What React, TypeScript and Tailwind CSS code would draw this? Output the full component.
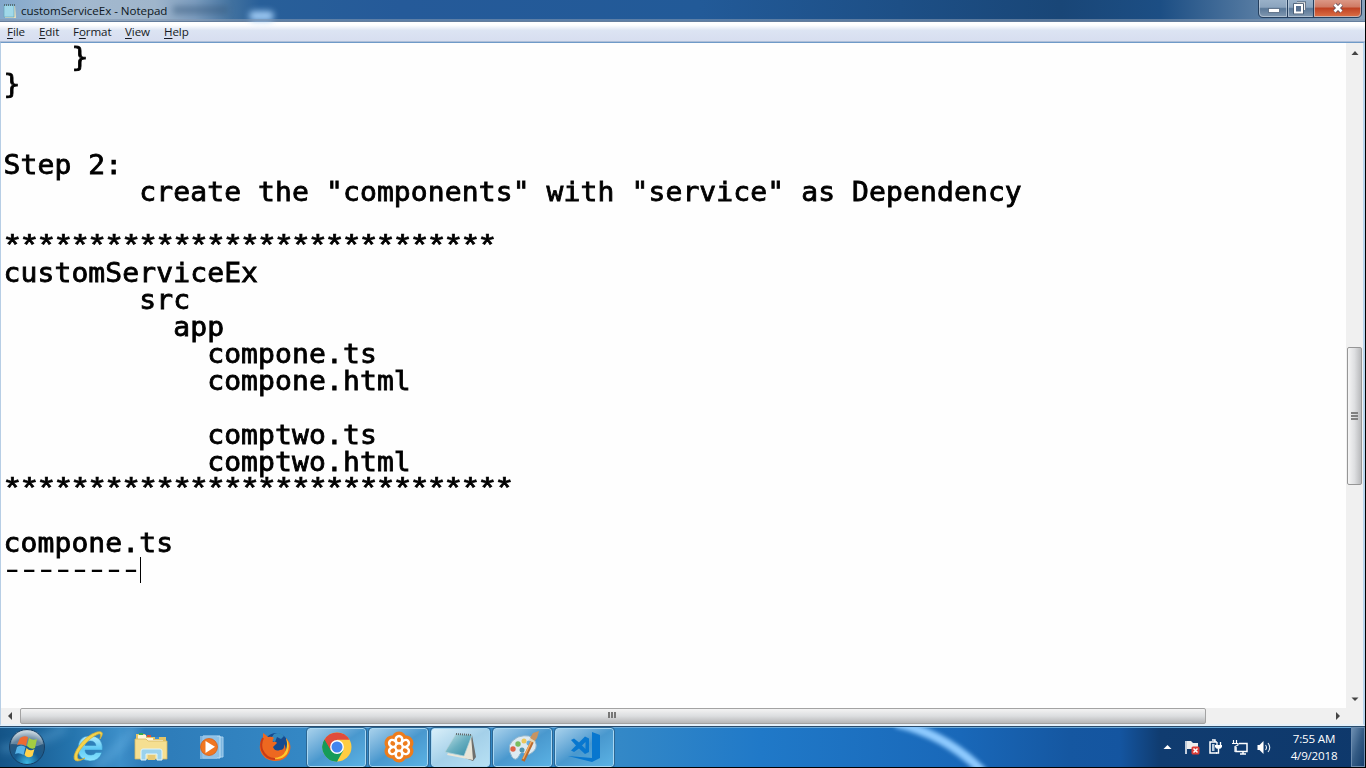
import React from "react";

const lines = [
  "    }",
  "}",
  "",
  "",
  "Step 2:",
  '        create the "components" with "service" as Dependency',
  "",
  "*".repeat(29),
  "customServiceEx",
  "        src",
  "          app",
  "            compone.ts",
  "            compone.html",
  "",
  "            comptwo.ts",
  "            comptwo.html",
  "*".repeat(30),
  "",
  "compone.ts",
  "--------",
];

function Line({ text }: { text: string }) {
  if (text.startsWith("*")) {
    return (
      <div className="h-[27px] font-['Liberation_Mono',monospace] text-[30px] leading-[27px] tracking-[-3.25px] whitespace-pre [-webkit-text-stroke:0.7px_black]">
        <span className="-ml-[2px] inline-block h-[27px] origin-top-left scale-x-[1.15] pt-[3px]">{text}</span>
      </div>
    );
  }
  if (text.startsWith("-")) {
    return (
      <div className="flex h-[27px] items-start [-webkit-text-stroke:0px]">
        <div className="w-[136px]">
          <span className="-ml-[4px] inline-block origin-top-left scale-x-[1.45] leading-[27px] tracking-[-5.16px] whitespace-pre">{text}</span>
        </div>
        <span className="mt-px h-[26px] w-px bg-black" />
      </div>
    );
  }
  return (
    <div className="h-[27px]">
      <span className="inline-block h-[27px] origin-[0_22px] scale-y-[0.92] leading-[27px] whitespace-pre">{text}</span>
    </div>
  );
}

function MenuItem({ k, rest, pre = "", w }: { k: string; rest: string; pre?: string; w: string }) {
  return (
    <span className={w}>
      {pre}
      <span className="underline underline-offset-2">{k}</span>
      {rest}
    </span>
  );
}

function WindowButtons() {
  return (
    <svg width="108" height="20" viewBox="0 0 108 20">
      <defs>
        <linearGradient id="wb" x1="0" y1="0" x2="0" y2="1">
          <stop offset="0" stopColor="#9db4cb" />
          <stop offset=".48" stopColor="#8ba4be" />
          <stop offset=".56" stopColor="#5a7898" />
          <stop offset="1" stopColor="#8299b1" />
        </linearGradient>
        <linearGradient id="wr" x1="0" y1="0" x2="0" y2="1">
          <stop offset="0" stopColor="#dfa08f" />
          <stop offset=".45" stopColor="#d07c66" />
          <stop offset=".55" stopColor="#c04324" />
          <stop offset="1" stopColor="#dd7147" />
        </linearGradient>
      </defs>
      <path d="M3 -2V13Q3 17 7 17H101Q105 17 105 13V-2Z" fill="url(#wb)" />
      <path d="M57 -2H105V13Q105 17 101 17H57Z" fill="url(#wr)" />
      <path d="M2.5 -1V13Q2.5 17.5 7 17.5H101Q105.500 17.500 105.500 13V-1M31.500 0V17M57.500 0V17" fill="none" stroke="#253f5e" />
      <path d="M3.500 0V13Q3.500 16.500 7 16.500H30.500V0M32.500 0V16.500H56.500M58.500 0V16.500H101Q104.500 16.500 104.500 13V0" fill="none" stroke="#c5d3e1" strokeOpacity=".65" />
      <rect x="12.500" y="8.500" width="11" height="4" fill="#fff" stroke="#53667e" strokeWidth=".8" />
      <path d="M41 3H48.500V10" fill="none" stroke="#43556b" strokeWidth="3" />
      <path d="M41 3H48.500V10" fill="none" stroke="#eee" strokeWidth="1.500" />
      <rect x="39" y="5" width="7" height="7.500" fill="#57708f" stroke="#43556b" strokeWidth="3.500" />
      <rect x="39" y="5" width="7" height="7.500" fill="#57708f" stroke="#fff" strokeWidth="2" />
      <path d="M78.500 4.500 85.500 11.500M85.500 4.500 78.500 11.500" stroke="#67505a" strokeWidth="4.500" />
      <path d="M78.500 4.500 85.500 11.500M85.500 4.500 78.500 11.500" stroke="#fff" strokeWidth="2.700" />
    </svg>
  );
}

function StartOrb() {
  return (
    <svg width="38" height="38" viewBox="0 0 38 38">
      <defs>
        <radialGradient id="orb" cx=".5" cy=".95" r=".9">
          <stop offset="0" stopColor="#3bb7e2" />
          <stop offset=".4" stopColor="#155b91" />
          <stop offset=".75" stopColor="#2b587d" />
          <stop offset="1" stopColor="#b9cad5" />
        </radialGradient>
      </defs>
      <circle cx="19" cy="19" r="17.500" fill="url(#orb)" stroke="#163f65" />
      <path d="M3 16Q5 3 19 3T35 16Q27 20 19 18T3 16Z" fill="#fff" opacity=".27" />
      <path d="M12 10Q16 7 20 9L18 18Q14 15 9 17Z" fill="#ed6b32" />
      <path d="M21 10Q25 13 29 11L27 20Q23 22 19 18Z" fill="#a4cd42" />
      <path d="M9 19Q13 16 17.500 19L15.500 27Q11 24 7 26Z" fill="#58b4e8" />
      <path d="M18.500 20Q22 24 26.500 21L24.500 28Q20 31 16.500 27Z" fill="#ffd34c" />
    </svg>
  );
}

function IeIcon() {
  return (
    <svg width="34" height="34" viewBox="0 0 34 34">
      <defs>
        <linearGradient id="ie" x1="0" y1="0" x2="0" y2="1">
          <stop offset="0" stopColor="#b3edff" />
          <stop offset=".5" stopColor="#5fcaf5" />
          <stop offset="1" stopColor="#8be4ff" />
        </linearGradient>
      </defs>
      <path d="M30.500 20H13Q13 25 19 25Q22 25 24 22.500H30Q27 31 18 31Q6 30 6 19Q6 6 18 6Q31 6 30.500 20ZM13 15.500H24Q23 11 18.500 11Q14 11 13 15.500Z" fill="url(#ie)" stroke="#2c87bd" strokeWidth=".5" fillRule="evenodd" />
      <path d="M28 9Q34 0 25 2Q14 5 5 19Q0 28 3.500 30.500Q7 32 13 28Q7 31 5.500 28Q4 24 12 15Q19 7 26 4Q30 3 28 9Z" fill="#f5d34b" stroke="#d4b13b" strokeWidth=".8" />
    </svg>
  );
}

function FolderIcon() {
  return (
    <svg width="34" height="32" viewBox="0 0 34 32">
      <path d="M2 3H11L13 6H32V28H2Z" fill="#e4c568" />
      <path d="M4 4H12V7H19V9H29V13H4Z" fill="#fff7dc" />
      <path d="M5 2H9V4H5Z" fill="#35a851" />
      <path d="M13 4H17V6H13Z" fill="#dc5038" />
      <path d="M21 6H25V8H21Z" fill="#3c8fd0" />
      <path d="M1 8H12L14 10H33V28H1Z" fill="#f5df91" stroke="#d7b861" strokeWidth=".8" />
      <path d="M7 29V20Q7 18 9 18H26Q28 18 28 20V29H23V23H12V29Z" fill="#9bd2ed" stroke="#e0f5fc" />
      <path d="M14 24H21V29H14Z" fill="#e6ca78" />
    </svg>
  );
}

function MediaIcon() {
  return (
    <svg width="28" height="28" viewBox="0 0 28 28">
      <path d="M8 4H25V24H8Z" fill="#7db6df" stroke="#a8d1ef" />
      <path d="M5 3H22V25H5Z" fill="#8dc1e6" stroke="#c1e1f7" />
      <path d="M2 3H19V26H2Z" fill="#91c1e6" opacity=".8" />
      <circle cx="11" cy="14" r="8.500" fill="#f07722" stroke="#d6580c" strokeWidth=".7" />
      <path d="M7.500 8 17 13.700 7.500 20Z" fill="white" />
    </svg>
  );
}

function FirefoxIcon() {
  return (
    <svg width="32" height="32" viewBox="0 0 32 32">
      <circle cx="17" cy="14" r="12" fill="#154b90" />
      <path d="M15 3Q21 0 25 5L22 8 18 6 16 11 11 9Z" fill="#3488bd" />
      <path d="M4 2Q7 4 9 6Q13 5 15 7Q13 9 14 11Q17 10 18 12L14 16Q16 21 21 19Q26 19 25 13Q28 17 26 22Q30 17 27 7Q34 14 30 22Q25 31 15 30Q4 29 1 19Q0 11 4 7Z" fill="#ed6820" />
      <path d="M27 7Q32 14 28 23Q22 30 14 27Q24 27 27 19Q29 13 27 7Z" fill="#ffc82c" />
      <path d="M4 7Q1 12 3 19Q7 28 16 28" fill="none" stroke="#c83b17" strokeWidth="2" />
    </svg>
  );
}

function ChromeIcon() {
  return (
    <svg width="30" height="30" viewBox="0 0 30 30">
      <circle cx="15" cy="15" r="14.500" fill="#ffcd42" />
      <path d="M15 15 2.440 7.750A14.500 14.500 0 0 1 27.560 7.750H15Z" fill="#df4c3c" />
      <path d="M2.440 7.750A14.500 14.500 0 0 0 15 29.500L21.300 18.600 15 15Z" fill="#159b59" />
      <path d="M2.440 7.750 8.700 18.600 15 15V7.750Z" fill="#df4c3c" />
      <path d="M2.440 7.750 8.700 18.600Q11 22 15 22.250L18 22 15 29.500A14.500 14.500 0 0 1 2.440 7.750Z" fill="#159b59" />
      <circle cx="15" cy="15" r="6.900" fill="#fff" />
      <circle cx="15" cy="15" r="5.500" fill="#4385ee" />
    </svg>
  );
}

function MeetingIcon() {
  const angles = [0, 60, 120, 180, 240, 300];
  return (
    <svg width="32" height="32" viewBox="0 0 32 32">
      {angles.map((a) => (
        <circle key={a} cx="16" cy="8" r="7.500" fill="#ed7c1c" transform={"rotate(" + a + " 16 16)"} />
      ))}
      <circle cx="16" cy="16" r="12" fill="#ed7c1c" />
      {angles.map((a) => (
        <ellipse key={a} cx="16" cy="8.800" rx="3.300" ry="3.800" fill="#ed7c1c" stroke="#fff" strokeWidth="2.500" transform={"rotate(" + a + " 16 16)"} />
      ))}
      <circle cx="16" cy="16" r="3.200" fill="#ed7c1c" stroke="#fff" strokeWidth="1.300" />
    </svg>
  );
}

function NotepadIcon() {
  return (
    <svg width="34" height="30" viewBox="0 0 34 30">
      <defs>
        <linearGradient id="np" x1="0" y1="0" x2="1" y2="1">
          <stop offset="0" stopColor="#c3e3e8" />
          <stop offset=".5" stopColor="#69afc0" />
          <stop offset="1" stopColor="#318aa4" />
        </linearGradient>
      </defs>
      <path d="M28 3 32 25 29 29 21 26Z" fill="#6e6f6d" />
      <path d="M27 3 29 28 3 23 4 21 19 24Z" fill="#e9e5d8" />
      <path d="M12 2 28 3 20 24 1 20Z" fill="url(#np)" stroke="#b4d2d8" strokeWidth=".7" />
      <path d="M12 2 28 3" stroke="#626b70" strokeWidth="2" strokeDasharray="1 1" />
    </svg>
  );
}

function PaintIcon() {
  return (
    <svg width="34" height="34" viewBox="0 0 34 34">
      <path d="M12 7Q25 3 29 11Q33 19 24 24Q20 26 18 23Q15 21 13 26Q10 32 6 27Q-2 14 12 7Z" fill="#dceaf2" stroke="#91b5cb" />
      <circle cx="7" cy="19" r="2.700" fill="#dd6349" />
      <circle cx="12" cy="14" r="2.700" fill="#79bd60" />
      <circle cx="18" cy="11" r="2.500" fill="#ecc75c" />
      <circle cx="23" cy="13" r="2.500" fill="#67afe0" />
      <circle cx="16" cy="20" r="2.500" fill="#4e93ad" />
      <path d="M27 10 17 31" stroke="#b86a2f" strokeWidth="3.500" />
      <path d="M26 10 17 29" stroke="#f4ac62" strokeWidth="1.500" />
      <path d="M24 8 27 3 33 1 31 8 28 12Z" fill="#c79462" />
      <path d="m24 8 5 3-1 2-5-3Z" fill="#e1d8ba" />
    </svg>
  );
}

function CodeIcon() {
  return (
    <svg width="36" height="34" viewBox="0 0 36 34">
      <path d="M25 2 33 5V28L25 32 1 26 25 28Z" fill="#0877cf" />
      <path fillRule="evenodd" d="M4 10 7 8.500 12 12.500 18 6.500 22 8.500V22L18 24 12 18.500 7 22 4 20.500 9 15.500ZM15 15.500 18.500 19V12Z" fill="#0877cf" />
    </svg>
  );
}

function TaskButton({ active = false, children }: { active?: boolean; children: React.ReactNode }) {
  return (
    <div
      className={
        "flex h-[39px] w-[59px] items-center justify-center rounded-[3px] border border-[#a8d7f3] outline outline-1 outline-[#2c6794] " +
        (active
          ? "bg-linear-to-br from-[#d9eff9] via-[#a4d0e9] to-[#b7e0f3]"
          : "bg-linear-to-br from-[#a6d0eb] via-[#4998ce] to-[#5bb2e4]")
      }
    >
      {children}
    </div>
  );
}

function TrayIcons() {
  return (
    <svg width="112" height="20" viewBox="0 0 112 20" fill="none">
      <path d="M3.500 12 7.500 8 11.500 12Z" fill="#fff" />
      <path d="M26 4V17" stroke="#fff" strokeWidth="1.500" />
      <path d="M27 4H31L33 6H38V12H27Z" fill="#eee" />
      <rect x="31.500" y="9.500" width="8" height="8" rx="1.500" fill="#de3d37" />
      <path d="m33.500 11.500 4 4m0-4-4 4" stroke="#fff" strokeWidth="1.500" />
      <path d="M57 5H50V16H57M52 3H55V5" stroke="#fff" strokeWidth="1.500" />
      <path d="M52 7H54.500V14H52Z" fill="#bbcddd" />
      <path d="M57 5V8M60.500 5V8" stroke="#fff" strokeWidth="1.300" />
      <path d="M55 8H62V10Q61 12 58.500 12Q56 12 55 10Z" fill="#fff" />
      <path d="M58.500 12V16H56" stroke="#fff" strokeWidth="1.400" />
      <path d="M79 6.500H87V14.500H76V10M80 17H86M83 14V17" stroke="#fff" strokeWidth="1.500" />
      <path d="M73.500 3V6M76.500 3V6M72 6.500H78V8L75 9.500V15" stroke="#fff" strokeWidth="1.200" />
      <path d="M97.500 8H99.500L103.500 4V17L99.500 13H97.500Z" fill="#fff" />
      <path d="M105.500 8Q107.500 10.500 105.500 13M108 6Q111.500 10.500 108 15" stroke="#e6eef5" strokeWidth="1.100" />
    </svg>
  );
}

export default function App() {
  return (
    <div className="flex h-[768px] w-[1366px] flex-col overflow-hidden border-r border-b border-black bg-white font-['Open_Sans','Noto_Sans',sans-serif] text-black">
      <header className="relative flex h-[22px] shrink-0 justify-between border-b border-[#657e9d]">
        <div className="absolute inset-0 bg-[linear-gradient(90deg,#83a8cc_0px,#a3b9cf_80px,#9fb5cb_155px,#7c9dbf_195px,#41719f_232px,#285f99_260px,#255a99_400px,#225a98_700px,#1d4f86_900px,#194677_1060px,#1c4e84_1160px,#5278a0_1250px,#88a3bc_1365px)]" />
        <div className="absolute top-[11px] left-[249px] h-[10px] w-[25px] rounded-full bg-[#9cc8f2] blur-[3px]" />
        <div className="absolute top-[6px] left-[173px] h-[8px] w-[55px] bg-[#355879]/50 blur-[3px]" />
        <div className="absolute inset-x-0 bottom-0 h-[2px] bg-[#8498b1]/60" />
        <div className="relative flex items-center">
          <svg className="ml-[3px]" width="14" height="18" viewBox="0 0 14 18">
            <path d="M1 3H12L13 16H2Z" fill="#e6dfbd" />
            <path d="M1 3H11V15H1Z" fill="#a0d8e9" stroke="#64a6bd" strokeWidth=".7" />
            <path d="M1 3H12" stroke="#596e79" strokeWidth="2" strokeDasharray="1 1" />
          </svg>
          <span className="ml-1 text-[11.6px] leading-[20px] tracking-[-0.05px] whitespace-nowrap text-[#0d1722]">customServiceEx - Notepad</span>
        </div>
        <div className="relative mr-[1px] h-[20px]">
          <WindowButtons />
        </div>
      </header>
      <nav className="flex h-[20px] shrink-0 items-center border-b border-[#aebfd8] bg-linear-to-b from-white from-15% via-[#dce4f3] via-45% to-[#d7def0] pt-px pl-[7px] text-[11.6px] tracking-[-0.1px] text-[#171b24]">
        <MenuItem w="w-[32px]" k="F" rest="ile" />
        <MenuItem w="w-[34px]" k="E" rest="dit" />
        <MenuItem w="w-[52px]" pre="F" k="o" rest="rmat" />
        <MenuItem w="w-[39px]" k="V" rest="iew" />
        <MenuItem w="w-[40px]" k="H" rest="elp" />
      </nav>
      <main className="flex h-[666px] shrink-0 border-t border-r-2 border-l border-t-[#6f9ac8] border-r-[#b7d5ed] border-l-[#b7cee5]">
        <div className="min-w-0 flex-1 overflow-hidden bg-[#fefefe] pl-[2.5px] font-['DejaVu_Sans_Mono','Liberation_Mono',monospace] text-[28px] leading-[27px] tracking-[0.115px] [-webkit-text-stroke:0.85px_black]">
          {lines.map((t, i) => (
            <Line key={i} text={t} />
          ))}
        </div>
        <div className="flex w-[17px] flex-col items-start bg-[#f0f0f0]">
          <svg width="16" height="17">
            <path d="M5.500 12 9 8 12.500 12Z" fill="#444" />
          </svg>
          <div className="mt-[287px] ml-px flex h-[138px] w-[15px] flex-col items-center justify-center gap-[1px] rounded-[2px] border border-[#969696] bg-linear-to-r from-[#f5f5f5] via-[#dedfe1] to-[#b9babc] pr-px">
            <div className="h-[2px] w-[7px] bg-[#808080]" />
            <div className="h-[2px] w-[7px] bg-[#808080]" />
            <div className="h-[2px] w-[7px] bg-[#808080]" />
          </div>
          <svg className="mt-auto" width="16" height="17">
            <path d="M5.500 6.500H12.500L9 10Z" fill="#444" />
          </svg>
        </div>
      </main>
      <div className="flex h-[18px] shrink-0 items-start border-r-2 border-b-2 border-l border-r-[#b7d5ed] border-b-[#e6f1fa] border-l-[#b7cee5] bg-[#f0f0f0]">
        <svg width="19" height="16">
          <path d="M11 4V12L7 8Z" fill="#444" />
        </svg>
        <div className="flex h-[16px] w-[1186px] items-center justify-center gap-[1px] rounded-[2px] border border-[#a3a3a3] bg-linear-to-b from-[#f3f3f3] via-[#dcdee0] to-[#b6b7b8] pr-[2px] pb-[2px]">
          <div className="h-[6px] w-[2px] bg-[#777]" />
          <div className="h-[6px] w-[2px] bg-[#777]" />
          <div className="h-[6px] w-[2px] bg-[#777]" />
        </div>
        <svg className="mr-[17px] ml-auto" width="16" height="16">
          <path d="M6 4V12L10 8Z" fill="#444" />
        </svg>
      </div>
      <footer className="relative flex h-[41px] shrink-0 items-center overflow-hidden border-t border-[#294b6c] bg-[linear-gradient(90deg,#145487_0px,#2473ac_70px,#3d8fc9_120px,#2d7bb8_145px,#3487c4_300px,#3388c7_620px,#2079c8_760px,#1968b9_960px,#1557a1_1070px,#1455a0_1120px,#103c70_1160px,#0e386b_1365px)] shadow-[inset_0_1px_0_#69a8d8]">
        <svg className="absolute inset-0" width="1365" height="40">
          <path d="M896 -4Q948 8 984 46" fill="none" stroke="#8fcbff" strokeWidth="9" className="blur-[2px]" />
          <path d="M0 22Q40 18 66 0M95 40Q118 24 136 0" fill="none" stroke="#8bd0fb" strokeOpacity=".25" strokeWidth="9" className="blur-[4px]" />
        </svg>
        <div className="relative flex h-full w-[307px] items-center">
          <div className="ml-[8px] w-[38px]"><StartOrb /></div>
          <div className="ml-[26px] w-[34px]"><IeIcon /></div>
          <div className="ml-[28px] w-[34px]"><FolderIcon /></div>
          <div className="ml-[30px] w-[28px]"><MediaIcon /></div>
          <div className="ml-[33px] w-[32px]"><FirefoxIcon /></div>
        </div>
        <div className="relative flex gap-[3px]">
          <TaskButton><ChromeIcon /></TaskButton>
          <TaskButton><MeetingIcon /></TaskButton>
          <TaskButton active><NotepadIcon /></TaskButton>
          <TaskButton><PaintIcon /></TaskButton>
          <TaskButton><CodeIcon /></TaskButton>
        </div>
        <div className="relative ml-auto flex h-full items-center">
          <TrayIcons />
          <div className="ml-[12px] w-[60px] text-center text-[11.6px] leading-[17px] tracking-[-0.2px] whitespace-nowrap text-white">
            <div>7:55 AM</div>
            <div>4/9/2018</div>
          </div>
          <div className="ml-[7px] h-full w-[14px] border border-[#6c8cae] bg-linear-to-br from-[#6d8fb2] via-[#345b84] to-[#163f6c]" />
        </div>
      </footer>
    </div>
  );
}
